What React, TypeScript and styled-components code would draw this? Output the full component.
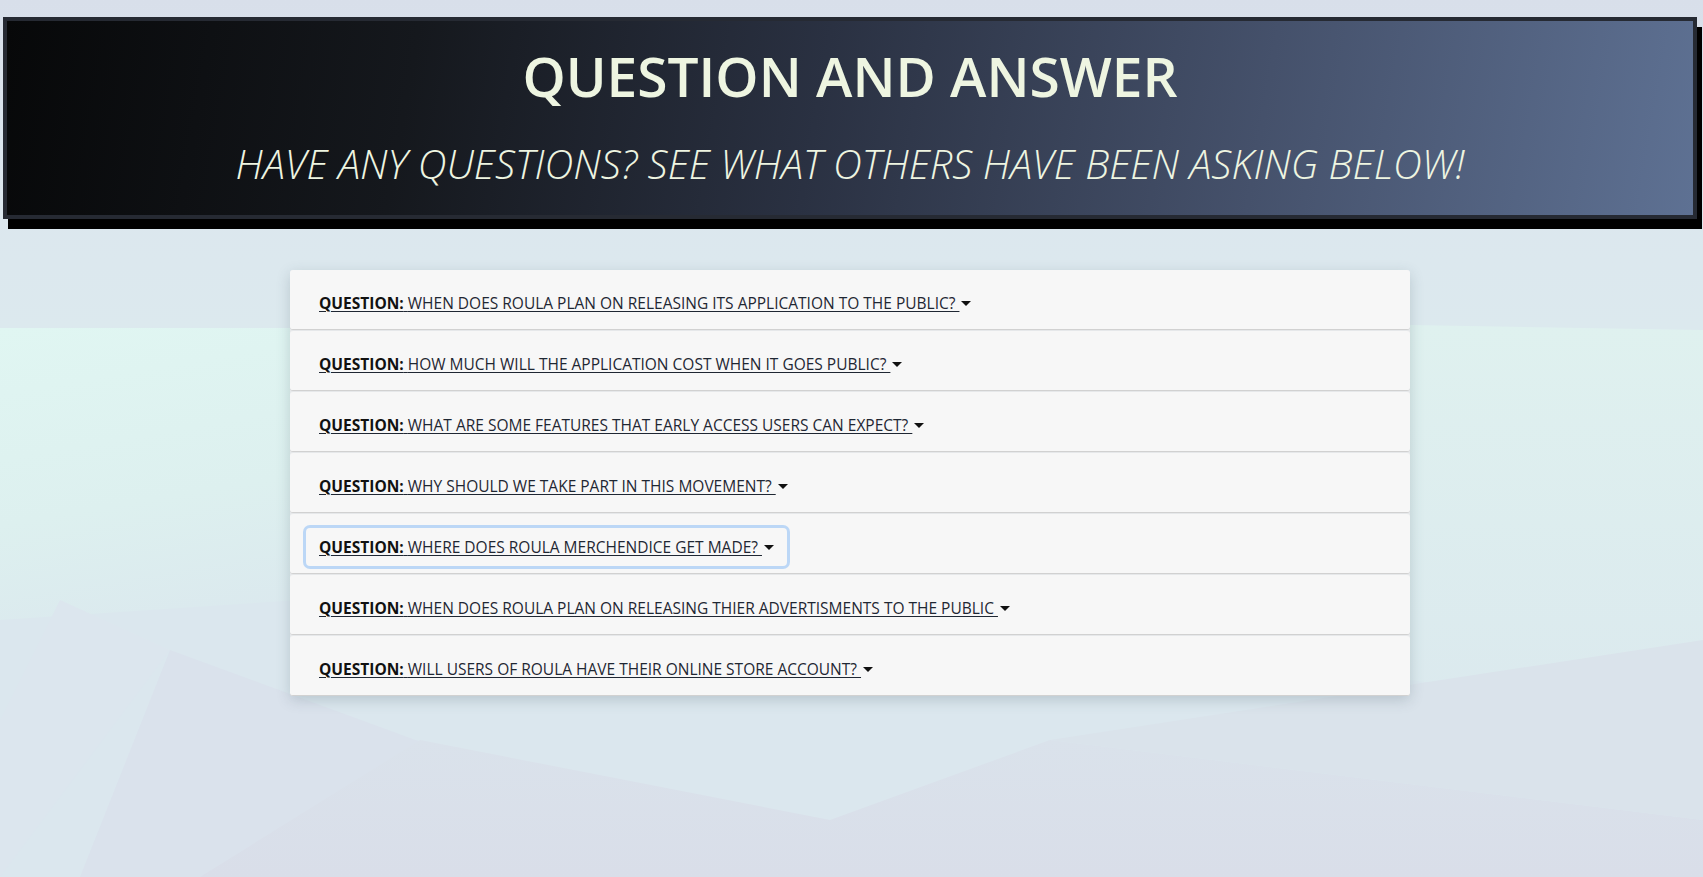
import React from "react";
import styled, { createGlobalStyle } from "styled-components";

const GlobalStyle = createGlobalStyle`
  html, body {
    margin: 0;
    padding: 0;
  }
  body {
    font-family: "Open Sans", "Noto Sans", Arial, sans-serif;
    background: #dbe7ee;
    min-height: 100vh;
  }
  * { box-sizing: border-box; }
`;

const Page = styled.div`
  position: relative;
  min-height: 877px;
  padding: 17px 6px 40px 3px;
  isolation: isolate;
`;

const Backdrop = styled.svg`
  position: absolute;
  inset: 0;
  width: 100%;
  height: 877px;
  z-index: -1;
  display: block;
`;

const Header = styled.header`
  border: 4px solid #262a33;
  box-shadow: 5px 10px 0 #000;
  background: linear-gradient(100deg, #070809 0%, #15181d 24%, #2a3142 48%, #45516b 74%, #5e7193 100%);
  text-align: center;
  padding: 22px 0 27px;
  color: #eef5e1;
`;

const Title = styled.h1`
  margin: 0;
  font-size: 55px;
  line-height: 1.2;
  font-weight: 600;
`;

const Subtitle = styled.h2`
  margin: 31px 0 0;
  font-size: 40px;
  line-height: 1.2;
  font-weight: 300;
  font-style: italic;
`;

const Accordion = styled.section`
  width: 1120px;
  margin: 51px auto 0;
  display: flex;
  flex-direction: column;
  gap: 1px;
  background: #e6e8ea;
  border-radius: 3px;
  box-shadow: 0 4px 14px rgba(60, 80, 95, 0.22);
`;

const Row = styled.div`
  height: 60px;
  background: #f7f7f7;
  border-bottom: 1px solid #d1d1d1;
  border-radius: 3px;
  padding: 14px 16px 0;
`;

const QuestionButton = styled.button<{ $focused?: boolean }>`
  display: inline-block;
  height: 38px;
  padding: 6px 12px;
  border: 1px solid transparent;
  border-radius: 4px;
  background: transparent;
  font-family: "Open Sans", "Noto Sans", Arial, sans-serif;
  font-size: 15.5px;
  line-height: 24px;
  color: #1f2733;
  text-transform: uppercase;
  text-decoration: underline;
  text-underline-offset: 2px;
  text-decoration-thickness: 1px;
  cursor: pointer;
  white-space: nowrap;
  box-shadow: ${(p) => (p.$focused ? "0 0 0 3px #bcd7f6" : "none")};
  outline: none;

  &::after {
    content: "";
    display: inline-block;
    margin-left: 2px;
    vertical-align: 3px;
    border-top: 5px solid #111;
    border-left: 5px solid transparent;
    border-right: 5px solid transparent;
  }
`;

const Label = styled.strong`
  font-weight: 700;
  color: #111;
`;

const questions = [
  "When does Roula plan on releasing its application to the public? ",
  "How much will the application cost when it goes public? ",
  "What are some features that early access users can expect? ",
  "Why should we take part in this movement? ",
  "Where does Roula merchendice get made? ",
  "When does Roula plan on releasing thier advertisments to the public ",
  "Will users of Roula have their online store account? ",
];

export default function App() {
  return (
    <>
      <GlobalStyle />
      <Page>
        <Backdrop viewBox="0 0 1703 877" preserveAspectRatio="none" aria-hidden="true">
          <defs>
            <linearGradient id="topg" x1="0" y1="0" x2="0" y2="1">
              <stop offset="0" stopColor="#d8dfea" />
              <stop offset="0.6" stopColor="#dce7ee" />
              <stop offset="1" stopColor="#dce9ee" />
            </linearGradient>
            <linearGradient id="mint" x1="0" y1="0" x2="0.35" y2="1">
              <stop offset="0" stopColor="#e0f6f2" />
              <stop offset="0.6" stopColor="#ddf0ef" />
              <stop offset="1" stopColor="#dbe9ee" />
            </linearGradient>
            <linearGradient id="mintR" x1="0" y1="0" x2="0" y2="1">
              <stop offset="0" stopColor="#dff1ef" />
              <stop offset="1" stopColor="#dbe9ee" />
            </linearGradient>
            <linearGradient id="bot" x1="0" y1="0" x2="0" y2="1">
              <stop offset="0" stopColor="#dae2eb" />
              <stop offset="1" stopColor="#d9dee9" />
            </linearGradient>
          </defs>
          <rect x="0" y="0" width="1703" height="877" fill="#dbe7ee" />
          <polygon points="0,0 1703,0 1703,330 0,330" fill="url(#topg)" />
          <polygon points="0,328 600,328 300,600 0,620" fill="url(#mint)" />
          <polygon points="1410,325 1703,330 1703,720 1410,680" fill="url(#mintR)" />
          <polygon points="60,600 170,650 0,877 0,720" fill="#dce6ee" />
          <polygon points="170,650 470,760 260,877 80,877" fill="#dae2ec" />
          <polygon points="420,740 830,820 1050,740 1703,820 1703,877 200,877" fill="url(#bot)" />
          <polygon points="1050,740 1703,640 1703,820" fill="#dae3eb" />
        </Backdrop>
        <Header>
          <Title>QUESTION AND ANSWER</Title>
          <Subtitle>HAVE ANY QUESTIONS? SEE WHAT OTHERS HAVE BEEN ASKING BELOW!</Subtitle>
        </Header>
        <Accordion>
          {questions.map((q, i) => (
            <Row key={i}>
              <QuestionButton type="button" $focused={i === 4}>
                <Label>Question:</Label> {q}
              </QuestionButton>
            </Row>
          ))}
        </Accordion>
      </Page>
    </>
  );
}
